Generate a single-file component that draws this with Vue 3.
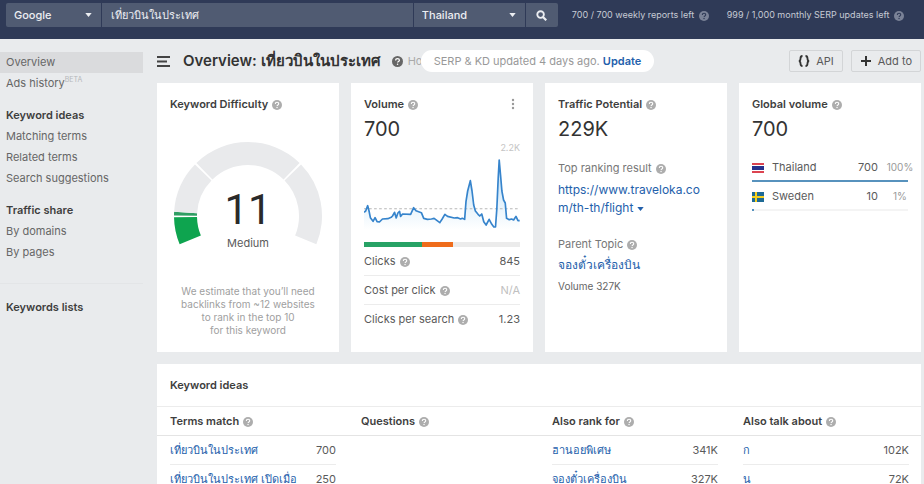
<script setup>
import { ref, h } from 'vue'

const HelpIcon = () =>
  h('svg', { class: 'help', viewBox: '0 0 20 20', width: 10, height: 10, 'aria-hidden': 'true' }, [
    h('circle', { cx: 10, cy: 10, r: 10, fill: 'currentColor' }),
    h('path', {
      d: 'M6.6 8c0-2.2 1.5-3.4 3.5-3.4s3.4 1.2 3.4 2.9c0 2.4-3.3 2.3-3.3 4.5',
      fill: 'none',
      stroke: 'var(--mark, #fff)',
      'stroke-width': 2.2,
    }),
    h('circle', { cx: 10.1, cy: 15, r: 1.4, fill: 'var(--mark, #fff)' }),
  ])

const engine = ref('Google')
const keyword = ref('เที่ยวบินในประเทศ')
const country = ref('Thailand')

const quotas = ['700 / 700 weekly reports left', '999 / 1,000 monthly SERP updates left']

const navGroups = [
  {
    title: '',
    items: [
      { label: 'Overview', active: true },
      { label: 'Ads history', badge: 'BETA' },
    ],
  },
  {
    title: 'Keyword ideas',
    items: [{ label: 'Matching terms' }, { label: 'Related terms' }, { label: 'Search suggestions' }],
  },
  { title: 'Traffic share', items: [{ label: 'By domains' }, { label: 'By pages' }] },
]

const polar = (r, deg) => {
  const a = (deg * Math.PI) / 180
  return `${(75 - r * Math.cos(a)).toFixed(2)} ${(75 - r * Math.sin(a)).toFixed(2)}`
}
const ring = (from, to) =>
  `M${polar(74, from)}A74 74 0 0 1 ${polar(74, to)}L${polar(51, to)}A51 51 0 0 0 ${polar(51, from)}Z`
const segments = [
  { d: ring(-22.5, -1), fill: '#0ea44f' },
  { d: ring(0.4, 3.2), fill: '#2f9e63' },
  { d: ring(3.2, 44.2), fill: '#e9eaec' },
  { d: ring(45.8, 134.2), fill: '#e9eaec' },
  { d: ring(135.8, 202.5), fill: '#e9eaec' },
]

const trend =
  '57,382 62,378 68,362 72,378 76,398 84,409 90,398 96,410 103,411 112,402 128,401 138,397 142,393 148,382 153,399 158,384 163,379 166,394 172,387 196,388 205,368 212,377 228,383 235,400 246,403 258,402 266,400 283,413 290,402 298,388 306,394 326,399 336,398 345,402 350,400 357,403 361,350 366,318 374,287 379,318 384,360 389,378 397,388 402,393 408,387 414,410 421,420 430,403 438,418 444,426 449,426 453,370 457,280 460,225 464,270 468,318 473,345 478,354 482,400 490,404 497,402 503,405 510,394 516,407 521,407'

const metrics = [
  { label: 'Clicks', value: '845' },
  { label: 'Cost per click', value: 'N/A', muted: true },
  { label: 'Clicks per search', value: '1.23' },
]

const countries = [
  { name: 'Thailand', volume: '700', pct: '100%', share: 100, flag: 'th' },
  { name: 'Sweden', volume: '10', pct: '1%', share: 1, flag: 'se' },
]

const ideas = [
  { title: 'Terms match', rows: [['เที่ยวบินในประเทศ', '700'], ['เที่ยวบินในประเทศ เปิดเมื่อ', '250']] },
  { title: 'Questions', rows: [] },
  { title: 'Also rank for', rows: [['ฮานอยพิเศษ', '341K'], ['จองตั๋วเครื่องบิน', '327K']] },
  { title: 'Also talk about', rows: [['ก', '102K'], ['น', '72K']] },
]
</script>

<template>
  <div class="page">
    <header class="topbar">
      <form class="search" @submit.prevent>
        <div class="pick engine">
          <select v-model="engine" aria-label="Search engine">
            <option>Google</option>
            <option>Bing</option>
          </select>
          <svg class="caret" viewBox="0 0 8 5" width="7" height="4"><path d="M0 0h8L4 5z" fill="currentColor" /></svg>
        </div>
        <input v-model="keyword" class="keyword" type="text" aria-label="Keyword" />
        <div class="pick country">
          <select v-model="country" aria-label="Country">
            <option>Thailand</option>
            <option>Sweden</option>
          </select>
          <svg class="caret" viewBox="0 0 8 5" width="7" height="4"><path d="M0 0h8L4 5z" fill="currentColor" /></svg>
        </div>
        <button class="go" type="submit" aria-label="Search">
          <svg viewBox="0 0 12 12" width="11" height="11" fill="none" stroke="currentColor" stroke-width="2">
            <circle cx="5" cy="5" r="3.6" />
            <path d="M7.6 7.6l3.6 3.6" stroke-width="2.4" />
          </svg>
        </button>
      </form>
      <ul class="quotas">
        <li v-for="q in quotas" :key="q">{{ q }} <HelpIcon /></li>
      </ul>
    </header>

    <div class="body">
      <nav class="sidebar">
        <section v-for="g in navGroups" :key="g.title" class="group">
          <h2 v-if="g.title">{{ g.title }}</h2>
          <a v-for="i in g.items" :key="i.label" href="#" :class="{ active: i.active }"
            >{{ i.label }}<sup v-if="i.badge">{{ i.badge }}</sup></a
          >
        </section>
        <section class="lists"><h2>Keywords lists</h2></section>
      </nav>

      <main class="content">
        <div class="heading">
          <button class="menu" type="button" aria-label="Toggle menu">
            <svg viewBox="0 0 14 11" width="14" height="11" stroke="currentColor" stroke-width="2">
              <path d="M0 1h13M0 5.5h10M0 10h13" />
            </svg>
          </button>
          <h1>Overview: เที่ยวบินในประเทศ</h1>
          <a class="how" href="#"><HelpIcon /><span>Ho</span></a>
          <p class="status">SERP &amp; KD updated 4 days ago. <a href="#">Update</a></p>
          <div class="actions">
            <button type="button">
              <svg viewBox="0 0 12 12" width="12" height="12" fill="none" stroke="currentColor" stroke-width="1.8">
                <path d="M4.5 1C2.6 1 2.5 2 2.5 3.5S2 6 .8 6c1.2 0 1.7 1 1.7 2.5S2.6 11 4.5 11M7.5 1c1.9 0 2 1 2 2.5S10 6 11.2 6C10 6 9.5 7 9.5 8.5S9.4 11 7.5 11" />
              </svg>
              API
            </button>
            <button type="button">
              <svg viewBox="0 0 12 12" width="12" height="12" fill="none" stroke="currentColor" stroke-width="2">
                <path d="M6 1v10M1 6h10" />
              </svg>
              Add to
            </button>
          </div>
        </div>

        <div class="cards">
          <section class="card difficulty">
            <h3>Keyword Difficulty <HelpIcon /></h3>
            <div class="gauge">
              <svg viewBox="0 0 150 106" width="150" height="106">
                <path v-for="s in segments" :key="s.d" :d="s.d" :fill="s.fill" />
              </svg>
              <div class="score"><strong>11</strong><span>Medium</span></div>
            </div>
            <p class="note">We estimate that you’ll need<br />backlinks from ~12 websites<br />to rank in the top 10<br />for this keyword</p>
          </section>

          <section class="card">
            <div class="card-top">
              <h3>Volume <HelpIcon /></h3>
              <button class="dots" type="button" aria-label="More options">
                <svg viewBox="0 0 4 12" width="4" height="12" fill="currentColor">
                  <circle cx="2" cy="2" r="1.2" /><circle cx="2" cy="6" r="1.2" /><circle cx="2" cy="10" r="1.2" />
                </svg>
              </button>
            </div>
            <p class="big">700</p>
            <p class="peak">2.2K</p>
            <svg class="trend" viewBox="57 210 465 225" preserveAspectRatio="none">
              <defs>
                <linearGradient id="trend-fill" x1="0" y1="0" x2="0" y2="1">
                  <stop offset="0" stop-color="#b9dcf5" />
                  <stop offset="1" stop-color="#ffffff" />
                </linearGradient>
              </defs>
              <polygon :points="`57,435 ${trend} 521,435`" fill="url(#trend-fill)" />
              <path d="M57 371H522" stroke="#b8b8b8" stroke-width="3" stroke-dasharray="8 7" />
              <polyline :points="trend" fill="none" stroke="#3684cc" stroke-width="5" stroke-linejoin="round" />
            </svg>
            <div class="split"><i class="organic"></i><i class="paid"></i></div>
            <dl class="metrics">
              <div v-for="m in metrics" :key="m.label">
                <dt>{{ m.label }} <HelpIcon /></dt>
                <dd :class="{ muted: m.muted }">{{ m.value }}</dd>
              </div>
            </dl>
          </section>

          <section class="card">
            <h3>Traffic Potential <HelpIcon /></h3>
            <p class="big">229K</p>
            <p class="label first">Top ranking result <HelpIcon /></p>
            <a class="url" href="#"
              >https://www.traveloka.com/th-th/flight
              <svg viewBox="0 0 8 5" width="7" height="4"><path d="M0 0h8L4 5z" fill="currentColor" /></svg
            ></a>
            <p class="label">Parent Topic <HelpIcon /></p>
            <a class="topic" href="#">จองตั๋วเครื่องบิน</a>
            <p class="small">Volume 327K</p>
          </section>

          <section class="card">
            <h3>Global volume <HelpIcon /></h3>
            <p class="big">700</p>
            <ul class="countries">
              <li v-for="c in countries" :key="c.name">
                <div class="row">
                  <svg v-if="c.flag === 'th'" viewBox="0 0 12 10" width="12" height="10">
                    <path d="M0 0h12v10H0z" fill="#fff" />
                    <path d="M0 0h12v2H0zM0 8h12v2H0z" fill="#dc4450" />
                    <path d="M0 3h12v4H0z" fill="#26328c" />
                  </svg>
                  <svg v-else viewBox="0 0 12 10" width="12" height="10">
                    <path d="M0 0h12v10H0z" fill="#1f6a95" />
                    <path d="M3 0h2v10H3zM0 4h12v2H0z" fill="#f5cf1f" />
                  </svg>
                  <span class="name">{{ c.name }}</span>
                  <span>{{ c.volume }}</span>
                  <span class="pct">{{ c.pct }}</span>
                </div>
                <div class="track"><i :style="{ width: c.share + '%' }"></i></div>
              </li>
            </ul>
          </section>
        </div>

        <section class="ideas">
          <h3 class="ideas-title">Keyword ideas</h3>
          <div class="columns">
            <section v-for="col in ideas" :key="col.title">
              <h4>{{ col.title }} <HelpIcon /></h4>
              <table v-if="col.rows.length" :aria-label="col.title">
                <tbody>
                  <tr v-for="r in col.rows" :key="r[0]">
                    <td><a href="#">{{ r[0] }}</a></td>
                    <td class="num">{{ r[1] }}</td>
                  </tr>
                </tbody>
              </table>
            </section>
          </div>
        </section>
      </main>
    </div>
  </div>
</template>

<style>
body {
  background: #e9ebed;
}
</style>

<style scoped>
.page {
  height: 100vh;
  overflow: hidden;
  background: #e9ebed;
  color: #5a5a5a;
  font: 11px/16px Inter, 'Noto Sans', 'Noto Sans CJK SC', sans-serif;
}
h1, h2, h3, h4, p, ul, dl, dd {
  margin: 0;
  padding: 0;
}
ul {
  list-style: none;
}
h2, h3, h4 {
  color: #3e3e3e;
  font-size: 11px;
  font-weight: 600;
}
a {
  color: #2360ab;
  text-decoration: none;
}
button, input, select {
  border: 0;
  margin: 0;
  border-radius: 0;
  background: none;
  color: inherit;
  font: inherit;
}
button {
  display: inline-flex;
  align-items: center;
  justify-content: center;
  padding: 0;
}
.help {
  color: #adadad;
  margin-left: 1px;
  vertical-align: -2px;
}
.topbar {
  display: flex;
  align-items: flex-start;
  gap: 14px;
  height: 36px;
  padding: 3px 20px 0 6px;
  background: #2f3a57;
}
.search {
  display: flex;
  flex: 1;
  gap: 1px;
  height: 24px;
  border-radius: 2px;
  overflow: hidden;
  color: #eceef2;
  font-weight: 500;
}
.search > * {
  background: #505b72;
}
.pick {
  display: flex;
  align-items: center;
  padding-right: 9px;
}
.pick select {
  flex: 1;
  height: 100%;
  padding: 0 8px;
  appearance: none;
}
.engine {
  width: 86px;
}
.country {
  width: 102px;
}
.keyword {
  flex: 1;
  min-width: 0;
  padding: 0 9px;
}
.go {
  width: 32px;
}
.quotas {
  display: flex;
  gap: 18px;
  color: #c6cad4;
  font-size: 9px;
  line-height: 24px;
  white-space: nowrap;
}
.quotas .help {
  --mark: #2f3a57;
  color: #7a8297;
  margin-left: 2px;
  vertical-align: -3px;
}
.body {
  display: flex;
  gap: 14px;
}
.sidebar {
  flex: none;
  width: 143px;
  padding-top: 13px;
}
.group {
  display: flex;
  flex-direction: column;
  margin-bottom: 10px;
}
.sidebar h2 {
  padding-left: 6px;
  line-height: 22px;
}
.sidebar a {
  padding-left: 6px;
  color: #666;
  line-height: 21px;
}
.sidebar a.active {
  background: #dadbdd;
}
.sidebar sup {
  color: #b5b7ba;
  font-size: 7px;
  line-height: 1px;
}
.lists {
  margin-top: 20px;
  padding-top: 12px;
  border-top: 1px solid #e3e5e7;
}
.content {
  flex: 1;
  min-width: 0;
  padding: 11px 3px 0 0;
}
.heading {
  display: flex;
  align-items: center;
  height: 22px;
  margin-bottom: 11px;
}
.menu {
  color: #444;
  margin-right: 12px;
}
h1 {
  color: #333;
  font-size: 15px;
  font-weight: 600;
  line-height: 22px;
  white-space: nowrap;
}
.how {
  display: flex;
  align-items: center;
  gap: 5px;
  margin-left: 10px;
  color: #aaa;
}
.how span {
  width: 13px;
  overflow: hidden;
}
.how .help {
  color: #666;
  width: 11px;
  height: 11px;
}
.status {
  padding: 0 13px;
  border-radius: 11px;
  background: #fff;
  color: #999;
  line-height: 22px;
  white-space: nowrap;
}
.status a {
  font-weight: 600;
}
.actions {
  display: flex;
  gap: 8px;
  margin-left: auto;
}
.actions button {
  gap: 6px;
  height: 22px;
  padding: 0 8px;
  border: 1px solid #d3d5d7;
  border-radius: 2px;
}
.actions svg {
  color: #333;
}
.cards {
  display: grid;
  grid-template-columns: repeat(4, minmax(0, 1fr));
  gap: 12px;
}
.card {
  min-height: 243px;
  padding: 13px;
  background: #fff;
}
.card-top {
  display: flex;
  justify-content: space-between;
}
.dots {
  color: #999;
  width: 14px;
}
.big {
  margin-top: 4px;
  color: #333;
  font-size: 20px;
  line-height: 27px;
}
.gauge {
  display: grid;
  justify-items: center;
  margin-top: 29px;
}
.gauge > * {
  grid-area: 1 / 1;
}
.score {
  display: flex;
  flex-direction: column;
  align-items: center;
  padding-top: 44px;
}
.score strong {
  color: #2a2a2a;
  font-family: Roboto, sans-serif;
  font-size: 42px;
  font-weight: 400;
  line-height: 50px;
}
.note {
  margin-top: 34px;
  color: #a0a0a0;
  font-size: 10px;
  line-height: 13px;
  text-align: center;
  white-space: nowrap;
}
.peak {
  margin-bottom: 2px;
  color: #c4c4c4;
  font-size: 9px;
  line-height: 10px;
  text-align: right;
}
.trend {
  display: block;
  width: 100%;
  height: 75px;
}
.split {
  display: flex;
  height: 5px;
  margin-top: 12px;
  background: #ebebeb;
}
.organic {
  width: 37%;
  background: #27a265;
}
.paid {
  width: 20%;
  background: #ef6c1b;
}
.metrics > div {
  display: flex;
  justify-content: space-between;
  line-height: 28px;
}
.metrics > div + div {
  border-top: 1px solid #ececec;
}
.muted {
  color: #c0c0c0;
}
.label {
  margin-top: 19px;
  color: #777;
}
.label.first {
  margin-top: 17px;
}
.url {
  display: block;
  margin-top: 5px;
  font-size: 12px;
  line-height: 18px;
  word-break: break-all;
}
.url svg {
  vertical-align: 1px;
}
.topic {
  display: block;
  margin-top: 5px;
  font-size: 12px;
}
.small {
  margin-top: 5px;
  color: #666;
  font-size: 10px;
}
.countries {
  margin-top: 10px;
}
.row {
  display: flex;
  align-items: center;
  height: 27px;
}
.row svg {
  margin-top: 3px;
}
.name {
  flex: 1;
  margin-left: 8px;
}
.pct {
  width: 28px;
  margin: 0 -6px 0 8px;
  color: #999;
  font-size: 10px;
  text-align: center;
}
.track {
  height: 2px;
  background: #f4f4f4;
}
.track i {
  display: block;
  height: 2px;
  background: #5792bd;
}
.ideas {
  margin-top: 12px;
  background: #fff;
}
.ideas-title {
  padding: 0 13px;
  border-bottom: 1px solid #ececec;
  line-height: 42px;
}
.columns {
  display: grid;
  grid-template-columns: repeat(4, minmax(0, 1fr));
}
h4 {
  padding: 0 13px;
  border-bottom: 1px solid #e4e4e4;
  line-height: 28px;
}
table {
  width: calc(100% - 25px);
  margin-left: 13px;
  border-collapse: collapse;
}
td {
  height: 28px;
  padding: 0;
  border-bottom: 1px solid #ececec;
  white-space: nowrap;
}
.num {
  text-align: right;
}
</style>
